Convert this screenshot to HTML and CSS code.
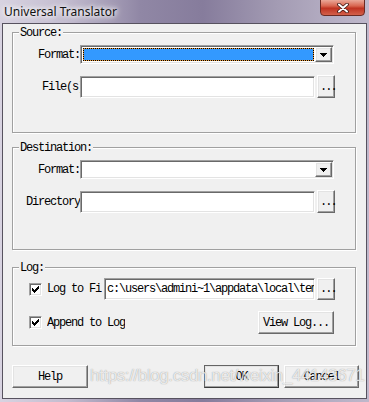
FILE: index.html
```html
<!DOCTYPE html>
<html lang="en">
<head>
    <meta charset="UTF-8">
    <title>Universal Translator</title>
    <link rel="stylesheet" href="styles.css">
</head>
<body>
    <div class="window">
        <div class="titlebar">
            <span class="title">Universal Translator</span>
            <span class="close">
                <svg width="12" height="10" viewBox="0 0 12 10">
                    <path d="M2 1.5 L10 8.5 M10 1.5 L2 8.5" stroke="#3a1410" stroke-width="3.6" stroke-linecap="round"/>
                    <path d="M2 1.5 L10 8.5 M10 1.5 L2 8.5" stroke="#fff" stroke-width="2" stroke-linecap="round"/>
                </svg>
            </span>
        </div>

        <div class="client">
            <div class="group source">
                <span class="legend">Source:</span>
                <div class="row">
                    <label class="label">Format:</label>
                    <div class="combo sunken">
                        <div class="sel-wrap"><div class="sel"></div></div>
                        <span class="combo-btn raised">
                            <svg width="7" height="4" viewBox="0 0 7 4"><path d="M0 0h7v1h-1v1h-1v1h-1v1h-1v-1h-1v-1h-1v-1h-1z" fill="#000"/></svg>
                        </span>
                    </div>
                </div>
                <div class="row">
                    <label class="label cut">File(s)</label>
                    <div class="field sunken"></div>
                    <button class="btn browse">...</button>
                </div>
            </div>

            <div class="group dest">
                <span class="legend">Destination:</span>
                <div class="row">
                    <label class="label">Format:</label>
                    <div class="combo sunken">
                        <div class="sel-wrap plain"></div>
                        <span class="combo-btn raised">
                            <svg width="7" height="4" viewBox="0 0 7 4"><path d="M0 0h7v1h-1v1h-1v1h-1v1h-1v-1h-1v-1h-1v-1h-1z" fill="#000"/></svg>
                        </span>
                    </div>
                </div>
                <div class="row">
                    <label class="label">Directory</label>
                    <div class="field sunken"></div>
                    <button class="btn browse">...</button>
                </div>
            </div>

            <div class="group log">
                <span class="legend">Log:</span>
                <div class="row">
                    <span class="check sunken">
                        <svg width="7" height="7" viewBox="0 0 7 7"><path d="M0 2h1v1h1v1h1v-1h1v-1h1v-1h1v-1h1v3h-1v1h-1v1h-1v1h-1v1h-1v-1h-1v-1h-1z" fill="#000"/></svg>
                    </span>
                    <span class="cb-label">Log to File</span>
                    <div class="field sunken log-path">c:\users\admini~1\appdata\local\temp\translator.log</div>
                    <button class="btn browse short">...</button>
                </div>
                <div class="row">
                    <span class="check sunken">
                        <svg width="7" height="7" viewBox="0 0 7 7"><path d="M0 2h1v1h1v1h1v-1h1v-1h1v-1h1v-1h1v3h-1v1h-1v1h-1v1h-1v1h-1v-1h-1v-1h-1z" fill="#000"/></svg>
                    </span>
                    <span class="cb-label wide">Append to Log</span>
                    <button class="btn view-log">View Log...</button>
                </div>
            </div>

            <div class="buttons">
                <button class="btn wide-btn">Help</button>
                <button class="btn default">OK</button>
                <button class="btn">Cancel</button>
            </div>
        </div>

        <div class="watermark">https://blog.csdn.net/weixin_44143671</div>
    </div>
</body>
</html>
```

FILE: styles.css
```css
body {
    margin: 0;
    font-family: "Liberation Mono", monospace;
    font-size: 12px;
    letter-spacing: -1.2px;
    color: #000;
}
.window {
    position: relative;
    width: 369px;
    height: 402px;
    display: flex;
    flex-direction: column;
    overflow: hidden;
    background: linear-gradient(90deg, #d8d3e1 0%, #c3bccf 18%, #9087a5 38%, #867c9c 55%, #a39bb3 75%, #b5aec3 90%, #bfb8cb 100%);
}
.titlebar {
    height: 23px;
    flex: none;
    display: flex;
    justify-content: space-between;
    align-items: flex-start;
}
.title {
    font-family: "Noto Sans", sans-serif;
    font-size: 12px;
    letter-spacing: 0;
    color: #111;
    padding: 3px 0 0 4px;
    text-shadow: 0 0 4px #fff, 0 0 6px #fff, 0 0 8px rgba(255, 255, 255, 0.8);
}
.close {
    width: 43px;
    height: 15px;
    margin: -1px 4px 0 0;
    border: 1px solid #6b2a22;
    border-radius: 0 0 4px 4px;
    background: linear-gradient(#eaa898, #d8654f 40%, #bf3321 55%, #d3604a);
    display: flex;
    align-items: center;
    justify-content: center;
}
.client {
    flex: 1;
    margin: 0 2px 3px 2px;
    border: 1px solid #57525f;
    background: #f0f0f0;
    padding: 8px 10px 10px 9px;
    display: flex;
    flex-direction: column;
}
.group {
    position: relative;
    box-sizing: border-box;
    border: 1px solid #a0a0a0;
    box-shadow: inset 1px 1px #fff, 1px 1px #fff;
    flex: none;
}
.source {
    height: 101px;
    padding-top: 12px;
}
.dest {
    height: 103px;
    margin-top: 14px;
    padding-top: 12px;
}
.log {
    height: 79px;
    margin-top: 17px;
    padding-top: 10px;
}
.legend {
    position: absolute;
    top: -6px;
    left: 6px;
    padding: 0 1px;
    line-height: 12px;
    background: #f0f0f0;
}
.row {
    display: flex;
    align-items: center;
}
.row + .row {
    margin-top: 11px;
}
.label {
    width: 67px;
    flex: none;
    text-align: right;
    white-space: nowrap;
    overflow: hidden;
}
.label.cut {
    text-align: left;
    padding-left: 29px;
    width: 38px;
}
.sunken {
    border: 1px solid;
    border-color: #a0a0a0 #fff #fff #a0a0a0;
    box-shadow: inset 1px 1px #696969, inset -1px -1px #e3e3e3;
}
.raised {
    border: 1px solid;
    border-color: #fff #696969 #696969 #fff;
    box-shadow: inset -1px -1px #a0a0a0, inset 1px 1px #e3e3e3;
    background: #f0f0f0;
}
.combo {
    width: 254px;
    height: 19px;
    box-sizing: border-box;
    padding: 1px;
    background: #fff;
    display: flex;
}
.sel-wrap {
    flex: 1;
    margin: 1px;
    background: #e89a3c;
}
.sel-wrap.plain {
    background: #fff;
}
.sel {
    height: 100%;
    box-sizing: border-box;
    border: 1px dotted #000;
    background: #3399ff;
    background-clip: padding-box;
}
.combo-btn {
    width: 17px;
    flex: none;
    box-sizing: border-box;
    display: flex;
    align-items: center;
    justify-content: center;
}
.combo-btn svg {
    shape-rendering: crispEdges;
}
.field {
    width: 235px;
    height: 22px;
    box-sizing: border-box;
    padding: 1px 1px 1px 2px;
    background: #fff;
    flex: none;
    white-space: nowrap;
    overflow: hidden;
    line-height: 18px;
}
.btn {
    font: inherit;
    letter-spacing: inherit;
    color: #000;
    height: 23px;
    box-sizing: border-box;
    padding: 0;
    background: #f0f0f0;
    border: 1px solid;
    border-color: #fff #696969 #696969 #fff;
    box-shadow: inset -1px -1px #a0a0a0, inset 1px 1px #e3e3e3;
}
.browse {
    width: 18px;
    margin-left: 2px;
    letter-spacing: -2px;
    padding-left: 2px;
    align-self: flex-start;
}
.browse.short {
    height: 22px;
}
.check {
    width: 13px;
    height: 13px;
    box-sizing: border-box;
    background: #fff;
    margin-left: 16px;
    display: flex;
    align-items: center;
    justify-content: center;
    flex: none;
}
.check svg {
    shape-rendering: crispEdges;
}
.cb-label {
    width: 55px;
    margin: 0 2px 0 5px;
    white-space: nowrap;
    overflow: hidden;
    flex: none;
}
.cb-label.wide {
    width: auto;
}
.log-path {
    width: 211px;
}
.view-log {
    width: 76px;
    margin-left: auto;
    margin-right: 21px;
}
.buttons {
    display: flex;
    margin-top: 19px;
    margin-right: -3px;
}
.buttons .btn {
    width: 75px;
    margin-left: 5px;
}
.buttons .wide-btn {
    width: 76px;
    margin: 0 auto 0 0;
}
.buttons .default {
    border-color: #646464 #3c3c3c #3c3c3c #646464;
}
.watermark {
    position: absolute;
    left: 90px;
    top: 366px;
    font-family: "Liberation Sans", sans-serif;
    font-size: 17px;
    letter-spacing: -0.4px;
    color: rgba(255, 255, 255, 0.78);
    text-shadow: 0 0 1px rgba(60, 60, 60, 0.55);
    pointer-events: none;
}
```
